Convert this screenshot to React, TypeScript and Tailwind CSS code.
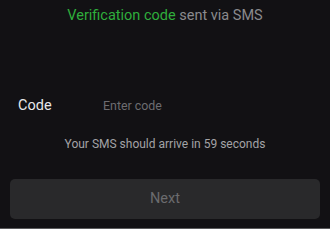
import React, { useState } from 'react';

export default function App() {
  const [code, setCode] = useState('');

  return (
    <div className="w-[330px] h-[229px] bg-[#121114] flex flex-col font-['Roboto',sans-serif] overflow-hidden">
      <p className="pt-[7px] text-center text-[14.5px] leading-[18px] text-[#8a8a8d]">
        <span className="text-[#2fae3c]">Verification code</span> sent via SMS
      </p>

      <div className="mt-[71px] flex items-center px-[18px] h-[20px]">
        <span className="w-[85px] text-[14.5px] text-[#e8e8ea]">Code</span>
        <input
          value={code}
          onChange={e => setCode(e.target.value)}
          placeholder="Enter code"
          className="flex-1 bg-transparent outline-none text-[12.4px] text-white placeholder:text-[#6d6c70]"
        />
      </div>

      <p className="mt-[21px] text-center text-[12px] leading-[14px] text-[#a3a3a6]">
        Your SMS should arrive in 59 seconds
      </p>

      <div className="mt-[28px] px-[10px]">
        <button className="w-full h-[40px] rounded-[5px] bg-[#29292b] text-[14.5px] text-[#6b6b6e]">
          Next
        </button>
      </div>
      <div className="mt-auto h-[1px] bg-[#5a5a5c]" />
    </div>
  );
}
